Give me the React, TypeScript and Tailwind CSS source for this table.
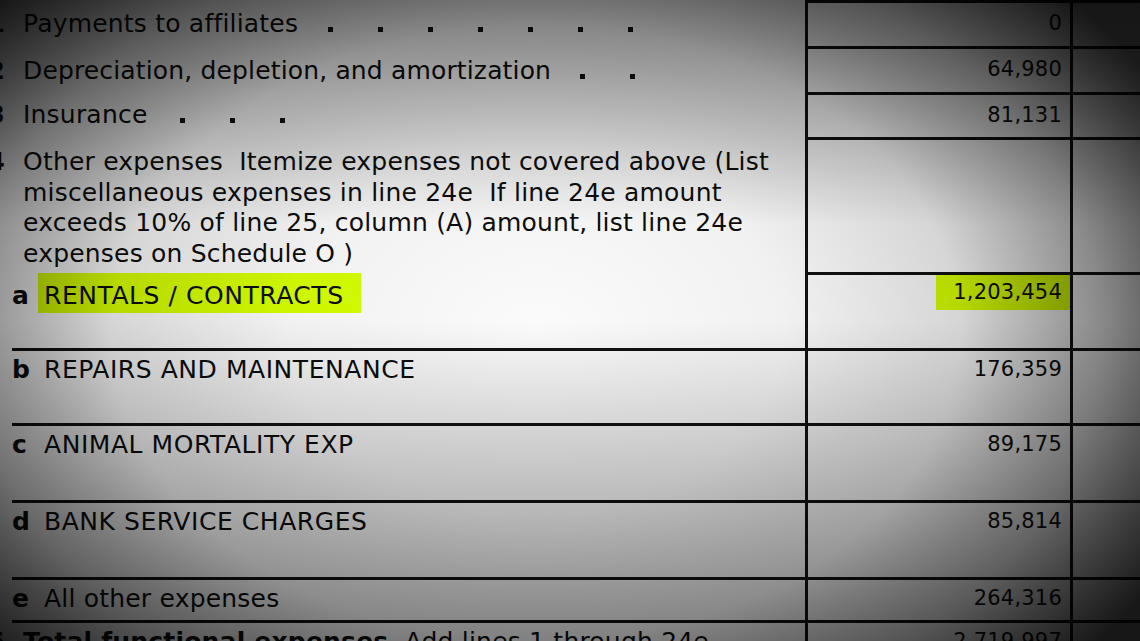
const font = { fontFamily: '"DejaVu Sans", Verdana, sans-serif' };

function Dots({ count }: { count: number }) {
  return (
    <div className="flex h-[30px] items-end gap-[45px] pb-[7px]">
      {Array.from({ length: count }).map((_, i) => (
        <span key={i} className="block w-[5px] h-[5px] bg-[#111]" />
      ))}
    </div>
  );
}

function Amount({ value, pt, hl }: { value?: string; pt: string; hl?: boolean }) {
  return (
    <div className="w-[265px] h-full border-l-[3px] border-t-[3px] border-[#111] flex justify-end">
      {value &&
        (hl ? (
          <div className="self-start">
            <span className="block bg-[#d6ff00] pl-[17px] pr-[8px] pt-[5px] pb-[6px] text-[21px] leading-[24px] tracking-[0.2px]">{value}</span>
          </div>
        ) : (
          <span className={`${pt} pr-[8px] text-[21px] leading-[24px] tracking-[0.2px]`}>{value}</span>
        ))}
    </div>
  );
}

function Rest() {
  return <div className="flex-1 h-full border-l-[3px] border-t-[3px] border-[#111]" />;
}

function LineNo({ n }: { n: string }) {
  return (
    <div className="w-[5px] mr-[18px] flex justify-end font-bold shrink-0">
      <span>{n}</span>
    </div>
  );
}

function SubRow({ letter, label, value, h, hl, caps }: { letter: string; label: string; value: string; h: string; hl?: boolean; caps?: boolean }) {
  return (
    <div className={`flex ${h}`}>
      <div className="w-[805px] pl-[12px]">
        {hl ? (
          <div className="flex items-start leading-[30px] pt-[1px]">
            <span className="font-bold w-[26px] pt-[8px]">{letter}</span>
            <span className="bg-[#d6ff00] pl-[6px] pr-[17px] pt-[8px] pb-[2px] tracking-[0.55px]">{label}</span>
          </div>
        ) : (
          <div className="h-full border-t-[3px] border-[#111] flex leading-[30px] pt-[4px]">
            <span className="font-bold w-[32px]">{letter}</span>
            <span className={caps ? "tracking-[0.55px]" : "tracking-[0.2px]"}>{label}</span>
          </div>
        )}
      </div>
      <Amount value={value} pt="pt-[6px]" hl={hl} />
      <Rest />
    </div>
  );
}

export default function App() {
  return (
    <div className="relative w-[1140px] h-[641px] overflow-hidden bg-[#fbfbfb] text-[#0d0d0d] text-[25px]" style={font}>
      <div className="flex flex-col">
        {/* lines 21 - 23 */}
        <div className="flex h-[46px]">
          <div className="w-[805px] flex pt-[9px] leading-[30px]">
            <LineNo n="21" />
            <span className="w-[305px] shrink-0 tracking-[0.2px]">Payments to affiliates</span>
            <Dots count={7} />
          </div>
          <Amount value="0" pt="pt-[8px]" />
          <Rest />
        </div>
        <div className="flex h-[46px]">
          <div className="w-[805px] flex pt-[10px] leading-[30px]">
            <LineNo n="22" />
            <span className="w-[557px] shrink-0 tracking-[0.15px]">Depreciation, depletion, and amortization</span>
            <Dots count={2} />
          </div>
          <Amount value="64,980" pt="pt-[8px]" />
          <Rest />
        </div>
        <div className="flex h-[45px]">
          <div className="w-[805px] flex pt-[8px] leading-[30px]">
            <LineNo n="23" />
            <span className="w-[157px] shrink-0 tracking-[0.2px]">Insurance</span>
            <Dots count={3} />
          </div>
          <Amount value="81,131" pt="pt-[8px]" />
          <Rest />
        </div>

        {/* line 24 */}
        <div className="flex h-[135px]">
          <div className="w-[805px] flex pt-[10px] leading-[30.7px]">
            <LineNo n="24" />
            <p className="w-[780px] tracking-[0.2px] whitespace-nowrap">
              Other expenses&nbsp; Itemize expenses not covered above (List
              <br />
              miscellaneous expenses in line 24e&nbsp; If line 24e amount
              <br />
              exceeds 10% of line 25, column (A) amount, list line 24e
              <br />
              expenses on Schedule O )
            </p>
          </div>
          <Amount pt="" />
          <Rest />
        </div>

        <SubRow letter="a" label="RENTALS / CONTRACTS" value="1,203,454" h="h-[76px]" hl />
        <SubRow letter="b" label="REPAIRS AND MAINTENANCE" value="176,359" h="h-[75px]" caps />
        <SubRow letter="c" label="ANIMAL MORTALITY EXP" value="89,175" h="h-[77px]" caps />
        <SubRow letter="d" label="BANK SERVICE CHARGES" value="85,814" h="h-[77px]" caps />
        <SubRow letter="e" label="All other expenses" value="264,316" h="h-[43px]" />

        {/* line 25 */}
        <div className="flex h-[60px]">
          <div className="w-[805px] flex flex-col">
            <div className="ml-[12px] border-t-[3px] border-[#111]" />
            <div className="flex leading-[30px] pt-[4px]">
              <LineNo n="25" />
              <span className="whitespace-nowrap tracking-[0.2px]">
                <b>Total functional expenses</b>&nbsp; Add lines 1 through 24e
              </span>
            </div>
          </div>
          <Amount value="2,719,997" pt="pt-[6px]" />
          <Rest />
        </div>
      </div>

      {/* camera vignette */}
      <div className="pointer-events-none absolute inset-0 bg-[radial-gradient(ellipse_62%_80%_at_47%_52%,rgba(0,0,0,0)_0%,rgba(0,0,0,0.04)_35%,rgba(0,0,0,0.15)_60%,rgba(0,0,0,0.45)_80%,rgba(0,0,0,0.85)_100%),linear-gradient(to_bottom,rgba(0,0,0,0.42)_0%,rgba(0,0,0,0.25)_14%,rgba(0,0,0,0)_35%,rgba(0,0,0,0)_50%,rgba(0,0,0,0.4)_100%)]" />
    </div>
  );
}
